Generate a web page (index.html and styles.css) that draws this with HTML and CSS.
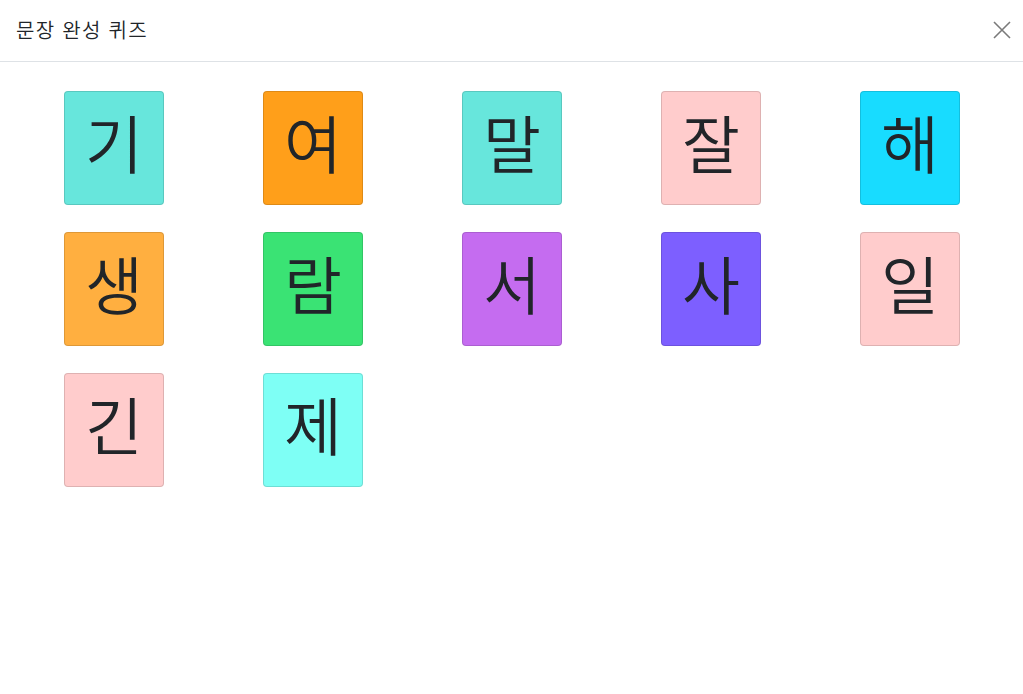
FILE: index.html
```html
<!DOCTYPE html>
<html lang="ko">
<head>
<meta charset="utf-8">
<title>문장 완성 퀴즈</title>
<link rel="stylesheet" href="styles.css">
</head>
<body>
<div class="modal">
  <header class="modal-header">
    <h5 class="modal-title">문장 완성 퀴즈</h5>
    <button class="close" aria-label="Close">
      <svg width="18" height="18" viewBox="0 0 18 18"><path d="M1 1L17 17M17 1L1 17" stroke="#7a7a7a" stroke-width="1.6" fill="none"/></svg>
    </button>
  </header>
  <main class="modal-body">
    <div class="tiles">
      <div class="tile c-teal">기</div>
      <div class="tile c-orange">여</div>
      <div class="tile c-teal">말</div>
      <div class="tile c-pink">잘</div>
      <div class="tile c-cyan">해</div>
      <div class="tile c-amber">생</div>
      <div class="tile c-green">람</div>
      <div class="tile c-purple">서</div>
      <div class="tile c-violet">사</div>
      <div class="tile c-pink">일</div>
      <div class="tile c-pink">긴</div>
      <div class="tile c-aqua">제</div>
    </div>
  </main>
</div>
</body>
</html>
```
FILE: styles.css
```css
* { box-sizing: border-box; }
html, body { margin: 0; padding: 0; background: #fff; }
body {
  font-family: "Noto Sans CJK KR", "Noto Sans", sans-serif;
  color: #212529;
}
.modal-header {
  display: flex;
  align-items: center;
  justify-content: space-between;
  height: 62px;
  padding: 0 12px 2px 16px;
  border-bottom: 1px solid #dee2e6;
}
.modal-title {
  margin: 0;
  font-size: 20px;
  font-weight: 350;
  letter-spacing: 1.3px;
  line-height: 30px;
  color: #212529;
}
.close {
  border: 0;
  background: transparent;
  padding: 0;
  width: 20px;
  height: 20px;
  display: flex;
  align-items: center;
  justify-content: center;
  margin-right: -1px;
}
.modal-body {
  padding: 29px 0 0 64px;
}
.tiles {
  display: grid;
  grid-template-columns: repeat(5, 100px);
  column-gap: 99px;
  row-gap: 27px;
}
.tile {
  width: 100px;
  height: 114px;
  border-radius: 4px;
  border: 1px solid rgba(0,0,0,0.13);
  display: flex;
  align-items: center;
  justify-content: center;
  font-size: 63px;
  font-weight: 350;
  line-height: 1;
  color: #212529;
  padding-bottom: 16px;
}
.c-teal { background: #67e6dc; }
.c-orange { background: #ff9f1a; }
.c-pink { background: #ffcccc; }
.c-cyan { background: #18dcff; }
.c-amber { background: #ffaf40; }
.c-green { background: #3ae374; }
.c-purple { background: #c56cf0; }
.c-violet { background: #7d5fff; }
.c-aqua { background: #7efff5; }
```
